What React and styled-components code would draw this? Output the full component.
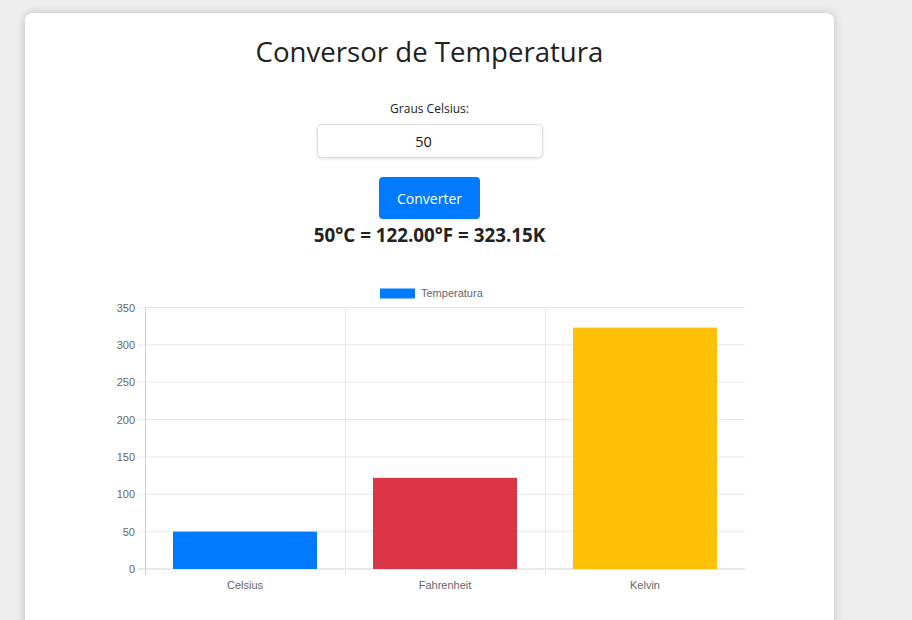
import React, { useState } from 'react'
import styled, { createGlobalStyle } from 'styled-components'

const GlobalStyle = createGlobalStyle`
    html, body {
        margin: 0;
        padding: 0;
        background: #eeeeee;
        font-family: 'Open Sans', 'Noto Sans', sans-serif;
        color: #222;
    }
`

const BARS = [
    { label: 'Celsius', color: '#007bff' },
    { label: 'Fahrenheit', color: '#dc3545' },
    { label: 'Kelvin', color: '#ffc107' },
]

// chart geometry
const PLOT_LEFT = 40
const PLOT_RIGHT = 640
const PLOT_TOP = 27.5
const PLOT_BOTTOM = 289
const MAX = 350
const CAT_W = (PLOT_RIGHT - PLOT_LEFT) / 3
const BAR_W = CAT_W * 0.72

function yFor(v) {
    return PLOT_BOTTOM - (v / MAX) * (PLOT_BOTTOM - PLOT_TOP)
}

function BarChart({ values }) {
    const ticks = [0, 50, 100, 150, 200, 250, 300, 350]
    return (
        <ChartSvg width='650' height='325' viewBox='0 0 650 325'>
            <rect x='275' y='8.5' width='35' height='10' fill='#007bff' />
            <ChartText x='316' y='17'>Temperatura</ChartText>
            {ticks.map((t) => (
                <g key={t}>
                    <line
                        x1='33'
                        x2={PLOT_RIGHT}
                        y1={yFor(t)}
                        y2={yFor(t)}
                        stroke={t === 0 ? '#d4d4d4' : '#e8e8e8'}
                        strokeWidth='1'
                    />
                    <ChartText x='30' y={yFor(t) + 4} textAnchor='end'>
                        {t}
                    </ChartText>
                </g>
            ))}
            {[0, 1, 2].map((i) => (
                <line
                    key={i}
                    x1={PLOT_LEFT + i * CAT_W + 0.5}
                    x2={PLOT_LEFT + i * CAT_W + 0.5}
                    y1={PLOT_TOP}
                    y2={PLOT_BOTTOM + 7}
                    stroke={i === 0 ? '#d4d4d4' : '#e8e8e8'}
                />
            ))}
            {BARS.map((b, i) => {
                const x = PLOT_LEFT + i * CAT_W + (CAT_W - BAR_W) / 2
                const y = yFor(values[i])
                return (
                    <g key={b.label}>
                        <rect
                            x={x}
                            y={y}
                            width={BAR_W}
                            height={PLOT_BOTTOM - y}
                            fill={b.color}
                        />
                        <ChartText
                            x={PLOT_LEFT + i * CAT_W + CAT_W / 2}
                            y='309'
                            textAnchor='middle'
                        >
                            {b.label}
                        </ChartText>
                    </g>
                )
            })}
        </ChartSvg>
    )
}

export default function App() {
    const [celsius, setCelsius] = useState('50')
    const [result, setResult] = useState(50)
    const f = result * 9 / 5 + 32
    const k = result + 273.15
    return (
        <Page>
            <GlobalStyle />
            <Card>
                <Title>Conversor de Temperatura</Title>
                <Label htmlFor='celsius'>Graus Celsius:</Label>
                <Input
                    id='celsius'
                    type='number'
                    value={celsius}
                    onChange={(e) => setCelsius(e.target.value)}
                />
                <Button onClick={() => setResult(parseFloat(celsius) || 0)}>
                    Converter
                </Button>
                <Result>
                    {result}°C = {f.toFixed(2)}°F = {k.toFixed(2)}K
                </Result>
                <BarChart values={[result, f, k]} />
            </Card>
        </Page>
    )
}

const Page = styled.div`
    padding: 13px 0 0 25px;
    height: 620px;
    box-sizing: border-box;
    overflow: hidden;
`
const Card = styled.div`
    width: 809px;
    min-height: 640px;
    background: #fff;
    border-radius: 8px;
    box-shadow: 0 0 10px rgba(0, 0, 0, 0.2);
    display: flex;
    flex-direction: column;
    align-items: center;
    padding-top: 20px;
    box-sizing: border-box;
`
const Title = styled.h1`
    margin: 0 0 31px;
    font-size: 27.6px;
    font-weight: 400;
    color: #222;
    line-height: 36px;
`
const Label = styled.label`
    font-size: 12px;
    color: #222;
    line-height: 18px;
    margin-bottom: 6px;
`
const Input = styled.input`
    width: 226px;
    height: 34px;
    box-sizing: border-box;
    border: 1px solid #ddd;
    border-radius: 5px;
    box-shadow: 0 1px 3px rgba(0, 0, 0, 0.12);
    text-align: center;
    padding: 0 12px 0 0;
    font-family: 'Open Sans', sans-serif;
    font-size: 14.5px;
    color: #111;
    outline: none;
    -moz-appearance: textfield;
    &::-webkit-outer-spin-button,
    &::-webkit-inner-spin-button {
        -webkit-appearance: none;
        margin: 0;
    }
`
const Button = styled.button`
    margin-top: 19px;
    width: 101px;
    height: 42px;
    border: none;
    border-radius: 4px;
    background: #007bff;
    color: #fff;
    font-family: 'Open Sans', sans-serif;
    font-size: 14px;
    cursor: pointer;
`
const Result = styled.div`
    margin-top: 3px;
    font-size: 18.8px;
    font-weight: 700;
    color: #222;
    line-height: 26px;
`
const ChartSvg = styled.svg`
    display: block;
    margin-top: 32px;
`
const ChartText = styled.text`
    font-family: 'Liberation Sans', Arial, sans-serif;
    font-size: 11px;
    fill: #666;
`
